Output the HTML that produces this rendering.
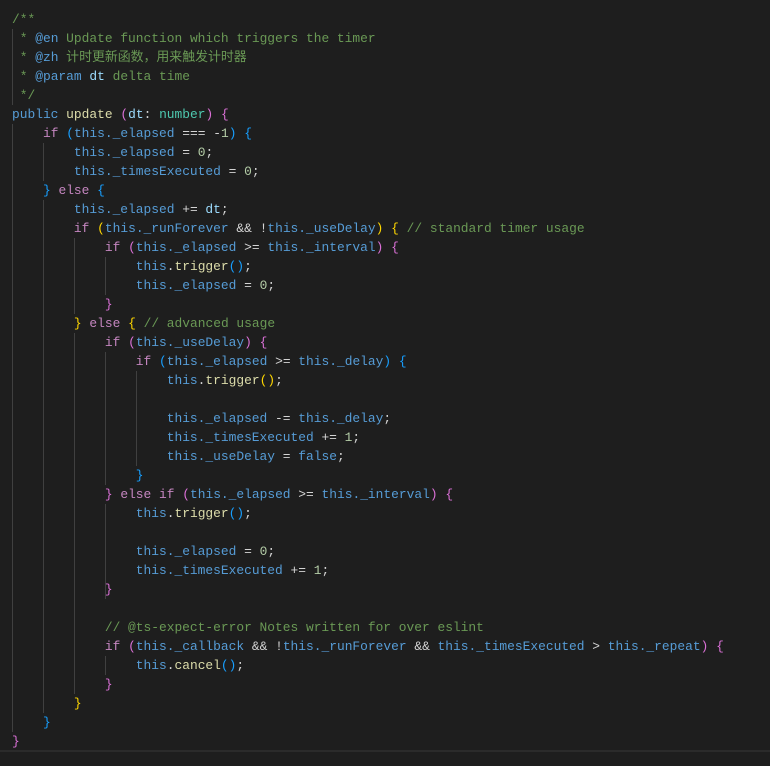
<!DOCTYPE html>
<html><head><meta charset="utf-8"><style>
html,body{margin:0;padding:0;background:#1e1e1e;width:770px;height:766px;overflow:hidden;position:relative}
pre{margin:0;position:absolute;left:12px;top:10px;font-family:"Liberation Mono","Noto Sans CJK SC",monospace;font-size:12.9px;line-height:19px;color:#d4d4d4;white-space:pre}
.k{color:#c586c0}.b{color:#569cd6}.f{color:#dcdcaa}.v{color:#9cdcfe}.t{color:#4ec9b0}.n{color:#b5cea8}.c{color:#6a9955}
.p{color:#da70d6}.q{color:#179fff}.g{color:#ffd700}
.gd{position:absolute;width:1px;background:#404040}
.bl{position:absolute;left:0;top:750px;width:770px;height:2px;background:#2b2b2b}
</style></head><body>
<div class="gd" style="left:12px;top:29px;height:76px"></div>
<div class="gd" style="left:12px;top:124px;height:608px"></div>
<div class="gd" style="left:43px;top:143px;height:38px"></div>
<div class="gd" style="left:43px;top:200px;height:513px"></div>
<div class="gd" style="left:74px;top:238px;height:76px"></div>
<div class="gd" style="left:74px;top:333px;height:361px"></div>
<div class="gd" style="left:105px;top:257px;height:38px"></div>
<div class="gd" style="left:105px;top:352px;height:133px"></div>
<div class="gd" style="left:105px;top:504px;height:95px"></div>
<div class="gd" style="left:105px;top:656px;height:19px"></div>
<div class="gd" style="left:136px;top:371px;height:95px"></div>
<div class="bl"></div>
<pre><span class="c">/**</span>
<span class="c"> * </span><span class="b">@en</span><span class="c"> Update function which triggers the timer</span>
<span class="c"> * </span><span class="b">@zh</span><span class="c"> 计时更新函数，用来触发计时器</span>
<span class="c"> * </span><span class="b">@param</span> <span class="v">dt</span><span class="c"> delta time</span>
<span class="c"> */</span>
<span class="b">public</span> <span class="f">update</span> <span class="p">(</span><span class="v">dt</span>: <span class="t">number</span><span class="p">)</span> <span class="p">{</span>
    <span class="k">if</span> <span class="q">(</span><span class="b">this._elapsed</span> === -<span class="n">1</span><span class="q">)</span> <span class="q">{</span>
        <span class="b">this._elapsed</span> = <span class="n">0</span>;
        <span class="b">this._timesExecuted</span> = <span class="n">0</span>;
    <span class="q">}</span> <span class="k">else</span> <span class="q">{</span>
        <span class="b">this._elapsed</span> += <span class="v">dt</span>;
        <span class="k">if</span> <span class="g">(</span><span class="b">this._runForever</span> &amp;&amp; !<span class="b">this._useDelay</span><span class="g">)</span> <span class="g">{</span> <span class="c">// standard timer usage</span>
            <span class="k">if</span> <span class="p">(</span><span class="b">this._elapsed</span> &gt;= <span class="b">this._interval</span><span class="p">)</span> <span class="p">{</span>
                <span class="b">this</span>.<span class="f">trigger</span><span class="q">()</span>;
                <span class="b">this._elapsed</span> = <span class="n">0</span>;
            <span class="p">}</span>
        <span class="g">}</span> <span class="k">else</span> <span class="g">{</span> <span class="c">// advanced usage</span>
            <span class="k">if</span> <span class="p">(</span><span class="b">this._useDelay</span><span class="p">)</span> <span class="p">{</span>
                <span class="k">if</span> <span class="q">(</span><span class="b">this._elapsed</span> &gt;= <span class="b">this._delay</span><span class="q">)</span> <span class="q">{</span>
                    <span class="b">this</span>.<span class="f">trigger</span><span class="g">()</span>;

                    <span class="b">this._elapsed</span> -= <span class="b">this._delay</span>;
                    <span class="b">this._timesExecuted</span> += <span class="n">1</span>;
                    <span class="b">this._useDelay</span> = <span class="b">false</span>;
                <span class="q">}</span>
            <span class="p">}</span> <span class="k">else if</span> <span class="p">(</span><span class="b">this._elapsed</span> &gt;= <span class="b">this._interval</span><span class="p">)</span> <span class="p">{</span>
                <span class="b">this</span>.<span class="f">trigger</span><span class="q">()</span>;

                <span class="b">this._elapsed</span> = <span class="n">0</span>;
                <span class="b">this._timesExecuted</span> += <span class="n">1</span>;
            <span class="p">}</span>

            <span class="c">// @ts-expect-error Notes written for over eslint</span>
            <span class="k">if</span> <span class="p">(</span><span class="b">this._callback</span> &amp;&amp; !<span class="b">this._runForever</span> &amp;&amp; <span class="b">this._timesExecuted</span> &gt; <span class="b">this._repeat</span><span class="p">)</span> <span class="p">{</span>
                <span class="b">this</span>.<span class="f">cancel</span><span class="q">()</span>;
            <span class="p">}</span>
        <span class="g">}</span>
    <span class="q">}</span>
<span class="p">}</span></pre>
</body></html>
